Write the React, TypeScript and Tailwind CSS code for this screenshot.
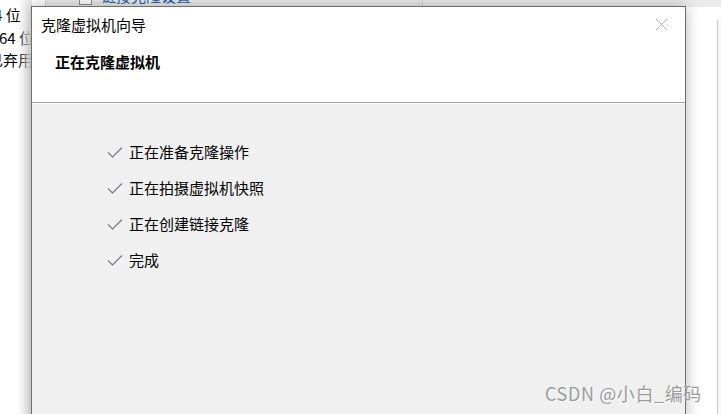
import { useMemo } from 'react';

const font = '"Noto Sans CJK SC", "Noto Sans", sans-serif';

const steps = ['正在准备克隆操作', '正在拍摄虚拟机快照', '正在创建链接克隆', '完成'];

const Check = () => (
  <svg width="16" height="12" viewBox="0 0 16 12" className="shrink-0">
    <path d="M1 6.5 L5.5 11 L15 1.5" fill="none" stroke="#6f7782" strokeWidth="1.1" />
  </svg>
);

const CloseX = () => (
  <svg width="13" height="13" viewBox="0 0 13 13">
    <path d="M1 1 L12 12 M12 1 L1 12" stroke="#b4b4b4" strokeWidth="1" />
  </svg>
);

export default function App() {
  const rows = useMemo(() => steps, []);

  return (
    <div
      className="relative w-[721px] h-[414px] overflow-hidden bg-white text-black"
      style={{ fontFamily: font }}
    >
      {/* window behind the dialog */}
      <div className="absolute left-[45px] top-0 w-[676px] h-[7px] bg-[#ebebeb] border-l border-[#d0d0d0]">
        <div className="absolute left-[33px] -top-[8px] w-[13px] h-[13px] border border-[#8a8a8a] bg-white" />
        <div className="absolute left-[55px] -top-[13px] text-[15px] text-[#1c5fb4] leading-[18px]">链接克隆设置</div>
        <div className="absolute left-[376px] top-0 h-[7px] w-px bg-[#d0d0d0]" />
      </div>
      <div className="absolute left-[-6px] top-[3px] text-[15px] leading-[24px] whitespace-nowrap">
        <div className="h-[23px]">4 位</div>
        <div className="h-[22px] ml-[5px]">64 位</div>
        <div className="h-[22px] ml-[-6px]">已弃用</div>
      </div>
      <div className="absolute left-[18px] top-0 w-[14px] h-[414px] bg-gradient-to-r from-transparent to-[#e6e6e6]" />
      <div className="absolute left-[717px] top-[20px] w-[4px] h-[394px] border-l border-[#c8c8c8] bg-[#f7f7f7]" />

      {/* dialog */}
      <div className="absolute left-[31px] top-[6px] w-[655px] h-[420px] border border-[#6e6e6e] bg-[#f0f0f0] shadow-[0_0_14px_rgba(0,0,0,0.28)] flex flex-col">
        <div className="h-[96px] bg-white relative border-b border-[#a0a0a0] shrink-0">
          <div className="pl-[9px] pt-[8px] text-[15px] leading-[20px]">克隆虚拟机向导</div>
          <div className="pl-[23px] pt-[17px] text-[15px] leading-[20px] font-bold">正在克隆虚拟机</div>
          <div className="absolute right-[17px] top-[11px]">
            <CloseX />
          </div>
        </div>
        <div className="h-px bg-white shrink-0" />
        <div className="flex flex-col pt-[30px] pl-[75px]">
          {rows.map((s) => (
            <div key={s} className="flex items-center h-[36px] gap-[6px]">
              <Check />
              <span className="text-[15px] leading-[20px]">{s}</span>
            </div>
          ))}
        </div>
      </div>

      {/* watermark */}
      <div
        className="absolute left-[545px] top-[381px] text-[18px] tracking-[0.6px] leading-[24px] text-[#9c9c9c] whitespace-nowrap"
        style={{ textShadow: '1px 1px 1px rgba(255,255,255,0.8)' }}
      >
        CSDN @小白_编码
      </div>
    </div>
  );
}
